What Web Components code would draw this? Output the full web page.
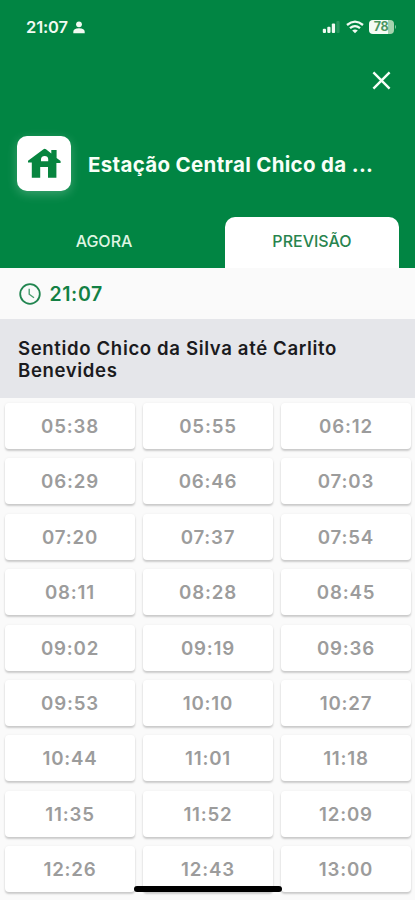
<!DOCTYPE html>
<html lang="pt-BR">
<head>
<meta charset="utf-8">
<title>Previsão</title>
<style>
body{margin:0;font-family:Inter,"Liberation Sans",sans-serif;background:#fafafa;overflow:hidden}
</style>
</head>
<body>
<station-app></station-app>
<script>
const define = (name, html) => customElements.define(name, class extends HTMLElement {
  connectedCallback() {
    if (this.shadowRoot) return;
    const t = document.createElement('template');
    t.innerHTML = html;
    this.attachShadow({mode: 'open'}).append(t.content.cloneNode(true));
  }
});

define('status-bar', `
<style>
:host{display:flex;height:54px;box-sizing:border-box;padding:0 18.5px 0 26px;align-items:center;color:#f1faf2}
.time{font-size:16.5px;font-weight:600;letter-spacing:-.15px;line-height:20px}
svg{display:block;fill:currentColor}
.person{margin:1px 0 0 5px}
.right{margin-left:auto;display:flex;align-items:center}
.battery{margin-left:5px;display:flex;align-items:center}
.level{width:25px;height:14px;border-radius:4px;background:linear-gradient(90deg,#f4fbf4 77%,#a5d3ae 77%);color:#4c9661;font-size:12.5px;font-weight:700;line-height:14px;text-align:center;letter-spacing:-.3px}
</style>
<span class="time">21:07</span>
<svg class="person" width="12" height="13" viewBox="0 0 12 13"><circle cx="6" cy="3.3" r="2.9"/><path d="M.3 12.3V10.8Q.3 7.2 6 7.2T11.7 10.8V12.3Z"/></svg>
<div class="right">
<svg width="19" height="14" viewBox="0 0 19 14"><rect x=".8" y="8.8" width="3.2" height="4.2" rx="1"/><rect x="5.3" y="6.8" width="3.2" height="6.2" rx="1"/><rect x="9.8" y="3.6" width="3.3" height="9.4" rx="1"/><rect x="14.4" y="1" width="3.2" height="12" rx="1" opacity=".16"/></svg>
<svg style="margin-left:5px" width="18" height="14" viewBox="0 0 18 14"><g fill="none" stroke="currentColor" stroke-width="2.3"><path d="M1 5Q9-1.7 17 5"/><path d="M4 8.2Q9 4 14 8.2"/></g><path d="M9 13.3 6.2 10.6Q9 8.6 11.8 10.6Z"/></svg>
<div class="battery"><span class="level">78</span><svg width="3" height="6" viewBox="0 0 3 6"><path d="M1 .8Q3 3 1 5.2Z" opacity=".55"/></svg></div>
</div>`);

define('close-button', `
<style>:host{display:flex;justify-content:flex-end;padding:17px 24.5px 0 0}svg{display:block}</style>
<svg width="19" height="19" viewBox="0 0 19 19"><path d="M1.4 1.4 17.6 17.6M17.6 1.4 1.4 17.6" stroke="#f8fff8" stroke-width="2.4" fill="none"/></svg>`);

define('station-title', `
<style>
:host{display:flex;align-items:center;padding:46px 0 0 17px;color:#f8fff8}
.logo{width:54px;height:55px;border-radius:10px;background:#fff;box-shadow:0 3px 11px rgba(255,255,255,.24);flex:none}
svg{display:block}
.name{margin-left:17px;padding-top:2px;font-size:20.5px;font-weight:700;line-height:26px;white-space:nowrap;letter-spacing:.32px}
</style>
<div class="logo"><svg width="54" height="55" viewBox="0 0 54 55" fill="#07853f"><path fill-rule="evenodd" d="M11 26.5V24.8L26.5 13.2Q27.7 12.3 29 13.2L34.3 17.4V14H39.6V22L43.6 25V27H39.4V41.7H31V31H23.2V41.7H14.8V26.5ZM24 25.2H31.2V23Q31 20 27.7 20T24 23Z"/></svg></div>
<div class="name"><slot></slot></div>`);

define('tab-item', `
<style>
:host{display:flex;align-items:center;justify-content:center;height:51px;box-sizing:border-box;color:#dff5e2;font-size:16px;font-weight:500;line-height:20px;border-radius:10px 10px 0 0;padding-bottom:4px}
:host([selected]){background:#fff;color:#28844e}
</style><slot></slot>`);

define('tab-strip', `
<style>:host{display:grid;grid-template-columns:208px 174px;column-gap:17px;margin-top:26px}</style><slot></slot>`);

define('app-header', `
<style>:host{display:flow-root;height:268px;background:#018543}</style><slot></slot>`);

define('current-time', `
<style>
:host{display:flex;align-items:center;height:51px;box-sizing:border-box;padding:1px 0 0 19px;background:#fafafa;color:#138044;font-size:19.5px;font-weight:600;letter-spacing:.6px}
svg{display:block;margin-right:8.5px}
</style>
<svg width="22" height="22" viewBox="0 0 22 22" fill="none" stroke="#218550"><circle cx="11" cy="11" r="9.8" stroke-width="1.8"/><path d="M10.2 5.8V11.2L15 14.8" stroke-width="1.4" stroke="#4b9d70"/></svg><slot></slot>`);

define('direction-heading', `
<style>:host{display:block;height:79px;box-sizing:border-box;padding:18px 60px 0 18px;background:#e5e6ea;color:#1b1b1e;font-size:18.6px;font-weight:600;line-height:22px;letter-spacing:.63px}</style><slot></slot>`);

define('time-card', `
<style>:host{display:flex;align-items:center;justify-content:center;height:46px;box-sizing:border-box;padding-top:2px;background:#fff;border-radius:4px;box-shadow:0 2px 2px rgba(0,0,0,.18),0 0 3px rgba(0,0,0,.05);color:#9c9c9c;font-size:18.7px;font-weight:600;letter-spacing:.8px;line-height:22px}</style><slot></slot>`);

define('time-grid', `
<style>:host{display:grid;grid-template-columns:repeat(3,130px);gap:9.42px 8px;padding:5px 0 0 5px;height:502px;box-sizing:border-box;align-content:start;overflow:hidden;background:#fafafa}</style><slot></slot>`);

define('home-indicator', `
<style>:host{position:absolute;left:134px;top:886px;width:148px;height:5.5px;border-radius:3px;background:#000}</style>`);

const times = ['05:38','05:55','06:12','06:29','06:46','07:03','07:20','07:37','07:54','08:11','08:28','08:45','09:02','09:19','09:36','09:53','10:10','10:27','10:44','11:01','11:18','11:35','11:52','12:09','12:26','12:43','13:00'];

define('station-app', `
<style>:host{display:block;position:relative;width:415px;height:900px;overflow:hidden}</style>
<app-header>
<status-bar></status-bar>
<close-button></close-button>
<station-title>Estação Central Chico da ...</station-title>
<tab-strip><tab-item>AGORA</tab-item><tab-item selected>PREVISÃO</tab-item></tab-strip>
</app-header>
<current-time>21:07</current-time>
<direction-heading>Sentido Chico da Silva até Carlito Benevides</direction-heading>
<time-grid>${times.map(t => `<time-card>${t}</time-card>`).join('')}</time-grid>
<home-indicator></home-indicator>`);
</script>
</body>
</html>
